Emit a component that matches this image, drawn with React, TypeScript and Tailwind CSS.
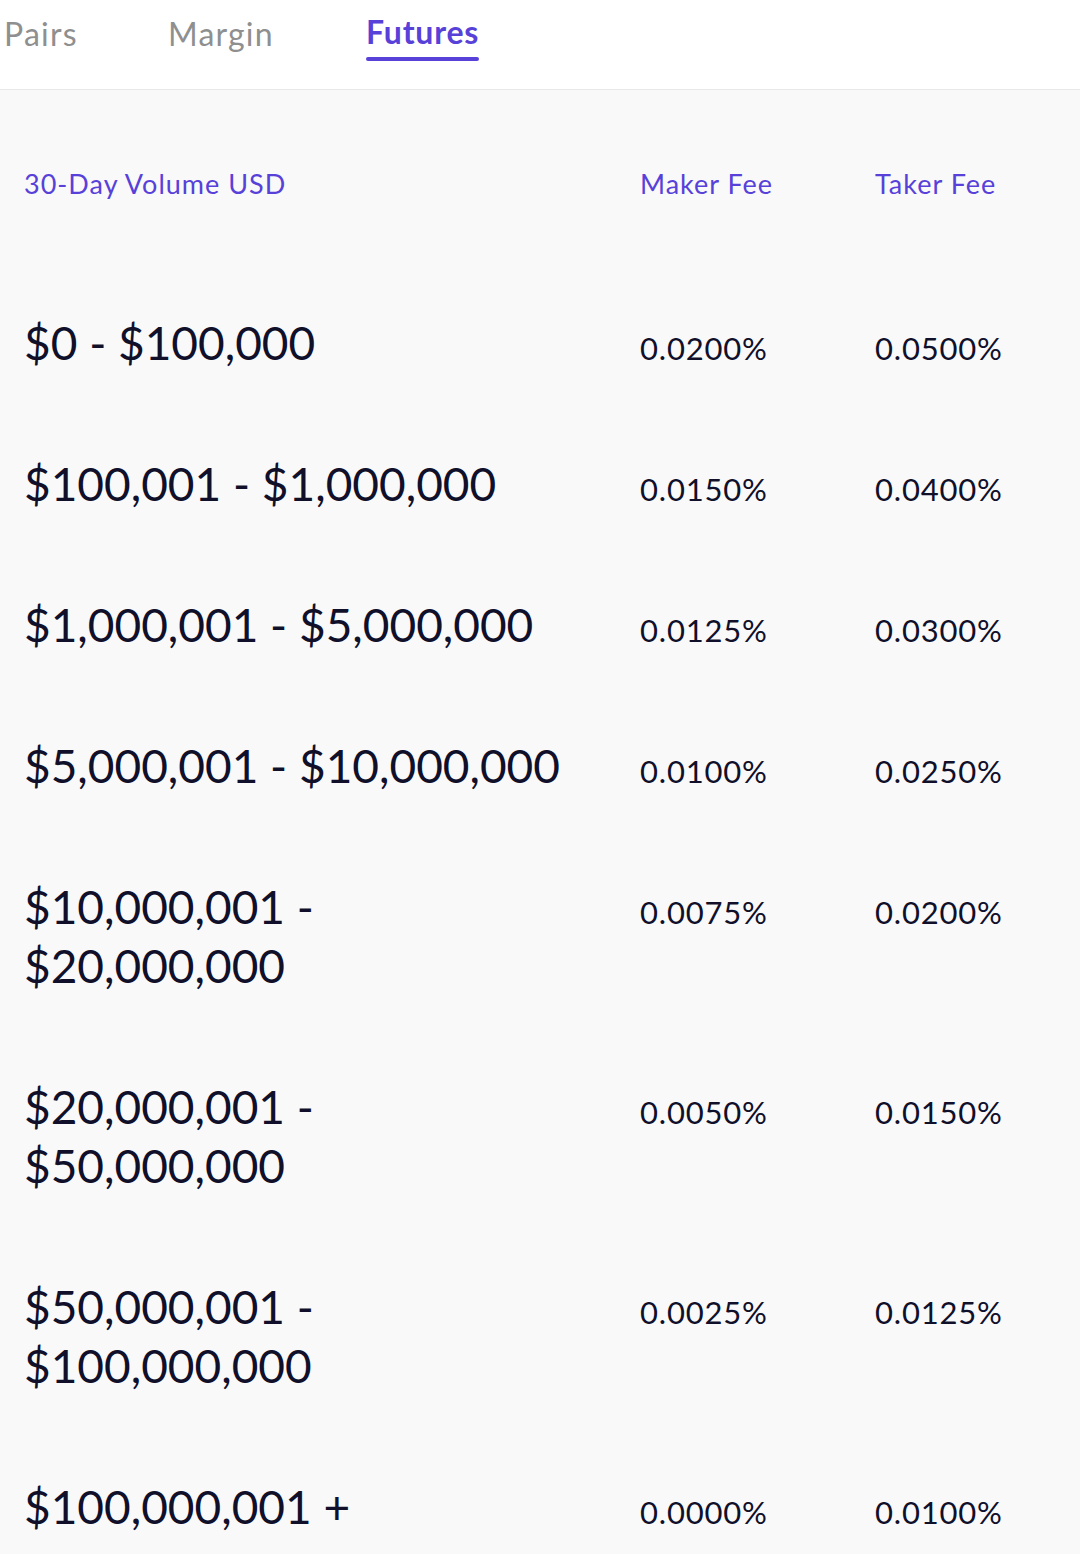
const tabs = [
  { label: 'Pairs', active: false, width: 'w-[164px]' },
  { label: 'Margin', active: false, width: 'w-[198px]' },
  { label: 'Futures', active: true, width: 'w-auto' },
];

const tiers = [
  { range: '$0 - $100,000', maker: '0.0200%', taker: '0.0500%' },
  { range: '$100,001 - $1,000,000', maker: '0.0150%', taker: '0.0400%' },
  { range: '$1,000,001 - $5,000,000', maker: '0.0125%', taker: '0.0300%' },
  { range: '$5,000,001 - $10,000,000', maker: '0.0100%', taker: '0.0250%' },
  { range: '$10,000,001 - $20,000,000', maker: '0.0075%', taker: '0.0200%' },
  { range: '$20,000,001 - $50,000,000', maker: '0.0050%', taker: '0.0150%' },
  { range: '$50,000,001 - $100,000,000', maker: '0.0025%', taker: '0.0125%' },
  { range: '$100,000,001 +', maker: '0.0000%', taker: '0.0100%' },
];

export default function App() {
  return (
    <div className="min-h-[1554px] bg-[#f9f9fa] font-['Lato',sans-serif]">
      <nav className="flex h-[90px] items-start border-b border-[#e8e8e8] bg-white pl-[4px]">
        {tabs.map(t => (
          <div key={t.label} className={`flex flex-col ${t.width}`}>
            <div className="flex">
              <div className="flex flex-col">
                <span
                  className={
                    t.active
                      ? 'pt-[12px] text-[32px] leading-[40px] font-bold tracking-[0.8px] text-[#5741d9]'
                      : 'pt-[14px] text-[32px] leading-[40px] tracking-[1.2px] text-[#8f8f8f]'
                  }
                >
                  {t.label}
                </span>
                {t.active && <div className="mt-[5px] h-[4px] rounded-sm bg-[#5741d9]" />}
              </div>
            </div>
          </div>
        ))}
      </nav>

      <div className="grid grid-cols-[616px_235px_1fr] pl-[24px] pt-[74px] text-[27px] leading-[40px] tracking-[1px] text-[#5741d9]">
        <div>30-Day Volume USD</div>
        <div>Maker Fee</div>
        <div>Taker Fee</div>
      </div>

      <div className="pt-[68px]">
        {tiers.map(t => (
          <div
            key={t.range}
            className="grid grid-cols-[616px_235px_1fr] items-baseline py-[41px] pl-[24px] text-[#10102a]"
          >
            <div className="max-w-[548px] text-[46px] leading-[59px]">{t.range}</div>
            <div className="text-[31px] tracking-[0.8px]">{t.maker}</div>
            <div className="text-[31px] tracking-[0.8px]">{t.taker}</div>
          </div>
        ))}
      </div>
    </div>
  );
}
